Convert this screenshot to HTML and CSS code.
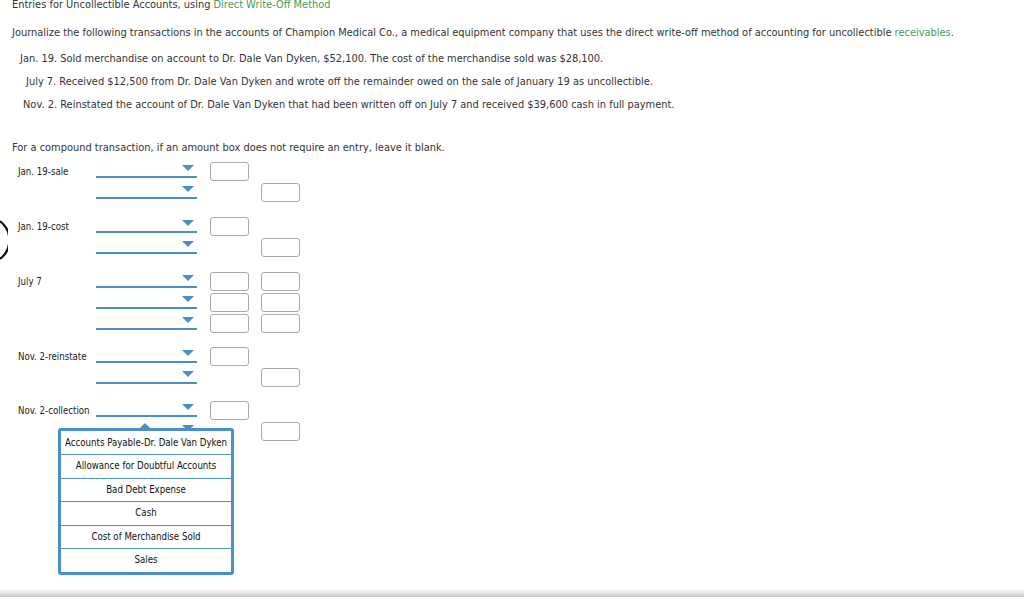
FILE: index.html
```html
<!DOCTYPE html>
<html>
<head>
<meta charset="utf-8">
<link rel="stylesheet" href="styles.css">
</head>
<body>
<div class="page">
  <div class="title">Entries for Uncollectible Accounts, using <span class="green">Direct Write-Off Method</span></div>
  <p class="intro">Journalize the following transactions in the accounts of Champion Medical Co., a medical equipment company that uses the direct write-off method of accounting for uncollectible <span class="green">receivables</span>.</p>
  <ul class="tx">
    <li class="ind-a">Jan. 19. Sold merchandise on account to Dr. Dale Van Dyken, $52,100. The cost of the merchandise sold was $28,100.</li>
    <li class="ind-b">July 7. Received $12,500 from Dr. Dale Van Dyken and wrote off the remainder owed on the sale of January 19 as uncollectible.</li>
    <li class="ind-c">Nov. 2. Reinstated the account of Dr. Dale Van Dyken that had been written off on July 7 and received $39,600 cash in full payment.</li>
  </ul>
  <p class="note">For a compound transaction, if an amount box does not require an entry, leave it blank.</p>

  <div class="journal">
    <div class="group">
      <div class="row"><div class="lbl">Jan. 19-sale</div><div class="dd"><span class="arrow"></span></div><div class="box"></div><div class="cell"></div></div>
      <div class="row"><div class="lbl"></div><div class="dd"><span class="arrow"></span></div><div class="cell"></div><div class="box"></div></div>
    </div>
    <div class="group">
      <div class="row"><div class="lbl">Jan. 19-cost</div><div class="dd"><span class="arrow"></span></div><div class="box"></div><div class="cell"></div></div>
      <div class="row"><div class="lbl"></div><div class="dd"><span class="arrow"></span></div><div class="cell"></div><div class="box"></div></div>
    </div>
    <div class="group tight">
      <div class="row"><div class="lbl">July 7</div><div class="dd"><span class="arrow"></span></div><div class="box"></div><div class="box"></div></div>
      <div class="row"><div class="lbl"></div><div class="dd"><span class="arrow"></span></div><div class="box"></div><div class="box"></div></div>
      <div class="row"><div class="lbl"></div><div class="dd"><span class="arrow"></span></div><div class="box"></div><div class="box"></div></div>
    </div>
    <div class="group tight">
      <div class="row"><div class="lbl">Nov. 2-reinstate</div><div class="dd"><span class="arrow"></span></div><div class="box"></div><div class="cell"></div></div>
      <div class="row"><div class="lbl"></div><div class="dd"><span class="arrow"></span></div><div class="cell"></div><div class="box"></div></div>
    </div>
    <div class="group">
      <div class="row"><div class="lbl">Nov. 2-collection</div><div class="dd open"><span class="arrow"></span>
        <div class="menu">
          <span class="caret"></span>
          <div class="opt">Accounts Payable-Dr. Dale Van Dyken</div>
          <div class="opt">Allowance for Doubtful Accounts</div>
          <div class="opt">Bad Debt Expense</div>
          <div class="opt">Cash</div>
          <div class="opt">Cost of Merchandise Sold</div>
          <div class="opt">Sales</div>
        </div>
      </div><div class="box"></div><div class="cell"></div></div>
      <div class="row"><div class="lbl"></div><div class="dd"><span class="arrow"></span></div><div class="cell"></div><div class="box"></div></div>
    </div>
  </div>
</div>
<svg class="edge-arc" width="8" height="44" viewBox="0 0 8 44"><path d="M0 3 A 24 24 0 0 1 0 41" fill="none" stroke="#111" stroke-width="2.2"/></svg>
<div class="footer-bar"></div>
</body>
</html>
```
FILE: styles.css
```css
html, body { margin: 0; padding: 0; background: #fff; }
body { width: 1024px; height: 603px; overflow: hidden; position: relative; font-family: "DejaVu Sans", Verdana, sans-serif; font-size: 9.85px; color: #333; }
.page { padding: 0 0 0 12px; }
.title { line-height: 10px; height: 10px; }
.green { color: #4a9a5a; }
.intro { margin: 17px 0 0 0; line-height: 12px; }
.tx { list-style: none; margin: 14px 0 0 0; padding: 0; }
.tx li { line-height: 12px; margin-bottom: 11px; }
.ind-a { padding-left: 8px; }
.ind-b { padding-left: 14px; }
.ind-c { padding-left: 11px; }
.note { margin: 31px 0 0 0; line-height: 12px; }
.journal { margin-top: 8px; padding-left: 6px; display: flex; flex-direction: column; }
.group { display: flex; flex-direction: column; margin-bottom: 13px; }
.group.tight { margin-bottom: 12px; }
.row { display: flex; height: 21px; align-items: flex-start; }
.lbl { width: 78px; font-family: "DejaVu Sans Condensed", "Liberation Sans", Tahoma, sans-serif; font-stretch: condensed; font-size: 9.6px; color: #222; line-height: 19px; white-space: nowrap; }
.dd { width: 101px; height: 14px; border-bottom: 2px solid #4a90c8; position: relative; }
.arrow { position: absolute; right: 3px; top: 3px; width: 0; height: 0; border-left: 6px solid transparent; border-right: 6px solid transparent; border-top: 6px solid #4a90c8; }
.box { width: 37px; height: 17px; border: 1px solid #aaa; border-radius: 3px; margin-left: 13px; background: #fff; flex: none; }
.box + .box { margin-left: 12px; }
.cell { width: 39px; margin-left: 13px; flex: none; }
.cell + .box { margin-left: 12px; }
.menu { position: absolute; left: -38px; top: 27px; width: 170px; border: 3px solid #4a90c8; border-radius: 3px; background: #fff; z-index: 5; }
.caret { position: absolute; left: 79px; top: -8px; width: 0; height: 0; border-left: 5px solid transparent; border-right: 5px solid transparent; border-bottom: 5px solid #4a90c8; }
.opt { height: 23px; line-height: 23px; text-align: center; font-family: "DejaVu Sans Condensed", "Liberation Sans", Tahoma, sans-serif; font-stretch: condensed; font-size: 9.6px; color: #111; white-space: nowrap; }
.opt + .opt { border-top: 1px solid #4a90c8; height: 22.6px; line-height: 22px; }
.edge-arc { position: absolute; left: 0; top: 218px; }
.footer-bar { position: absolute; left: 0; top: 589px; width: 1024px; height: 8px; background: linear-gradient(#fafafa, #e4e4e4 50%, #c8c8c8); }
```
